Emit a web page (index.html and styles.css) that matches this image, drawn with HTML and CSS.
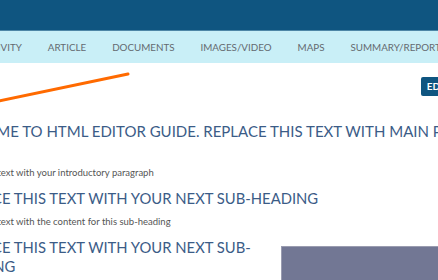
FILE: index.html
```html
<!DOCTYPE html>
<html>
<head>
<meta charset="utf-8">
<link rel="stylesheet" href="styles.css">
</head>
<body>
<header class="topbar"></header>
<nav class="nav">
  <a class="nav-item">ACTIVITY</a>
  <a class="nav-item">ARTICLE</a>
  <a class="nav-item">DOCUMENTS</a>
  <a class="nav-item">IMAGES/VIDEO</a>
  <a class="nav-item">MAPS</a>
  <a class="nav-item">SUMMARY/REPORT</a>
</nav>
<main class="page">
  <svg class="stroke" width="140" height="40" viewBox="0 0 140 40"><line x1="-20" y1="33" x2="128" y2="2" stroke="#ff6a00" stroke-width="3" stroke-linecap="round"/></svg>
  <div class="toolbar"><button class="edit">EDIT</button></div>
  <div class="content">
    <h1 class="title">WELCOME TO HTML EDITOR GUIDE. REPLACE THIS TEXT WITH MAIN PAGE HEADING</h1>
    <p class="text">Replace this text with your introductory paragraph</p>
    <h2 class="sub">REPLACE THIS TEXT WITH YOUR NEXT SUB-HEADING</h2>
    <p class="text">Replace this text with the content for this sub-heading</p>
    <div class="row">
      <h2 class="sub narrow">REPLACE THIS TEXT WITH YOUR NEXT SUB-HEADING</h2>
      <div class="figure"></div>
    </div>
  </div>
</main>
</body>
</html>
```
FILE: styles.css
```css
html, body {
  margin: 0;
  padding: 0;
  overflow: hidden;
  background: #fff;
  font-family: Lato, "Open Sans", sans-serif;
}
.topbar {
  height: 30px;
  background: #0f5580;
  border-bottom: 1px solid #4d86a6;
}
.nav {
  height: 32px;
  background: #c9eff7;
  display: flex;
  align-items: center;
  gap: 26px;
  margin-left: -21px;
  white-space: nowrap;
}
.nav-item {
  font-size: 9.8px;
  color: #646a70;
}
.page {
  position: relative;
}
.stroke {
  position: absolute;
  left: 0;
  top: 9px;
}
.toolbar {
  display: flex;
  justify-content: flex-end;
  padding-top: 14px;
  margin-right: -17px;
}
.edit {
  display: block;
  height: 19px;
  padding: 0 6px;
  border: 0;
  border-radius: 2px;
  background: #0f5580;
  color: #fff;
  font-family: Lato, sans-serif;
  font-weight: 700;
  font-size: 10px;
  line-height: 19px;
}
.content {
  margin-left: -52px;
  white-space: nowrap;
}
.title {
  margin: 25px 0 0 -5px;
  font-size: 15px;
  font-weight: 400;
  color: #3b5c87;
  line-height: 20px;
}
.text {
  margin: 26px 0 0 -3px;
  font-size: 9.5px;
  color: #555;
  line-height: 12px;
}
.sub {
  margin: 9px 0 0;
  font-size: 14.8px;
  font-weight: 400;
  color: #3b5c87;
  line-height: 20px;
}
.sub + .text {
  margin-top: 8px;
}
.row {
  display: flex;
  align-items: flex-start;
  margin-top: 10px;
}
.narrow {
  margin: 0;
  white-space: normal;
  width: 323px;
  flex: none;
  line-height: 19px;
}
.figure {
  flex: none;
  margin-top: 8px;
  margin-left: 10px;
  width: 220px;
  height: 60px;
  background: #727794;
  border-top: 1px solid #9a9cb0;
  border-left: 1px solid #9a9cb0;
}
```
